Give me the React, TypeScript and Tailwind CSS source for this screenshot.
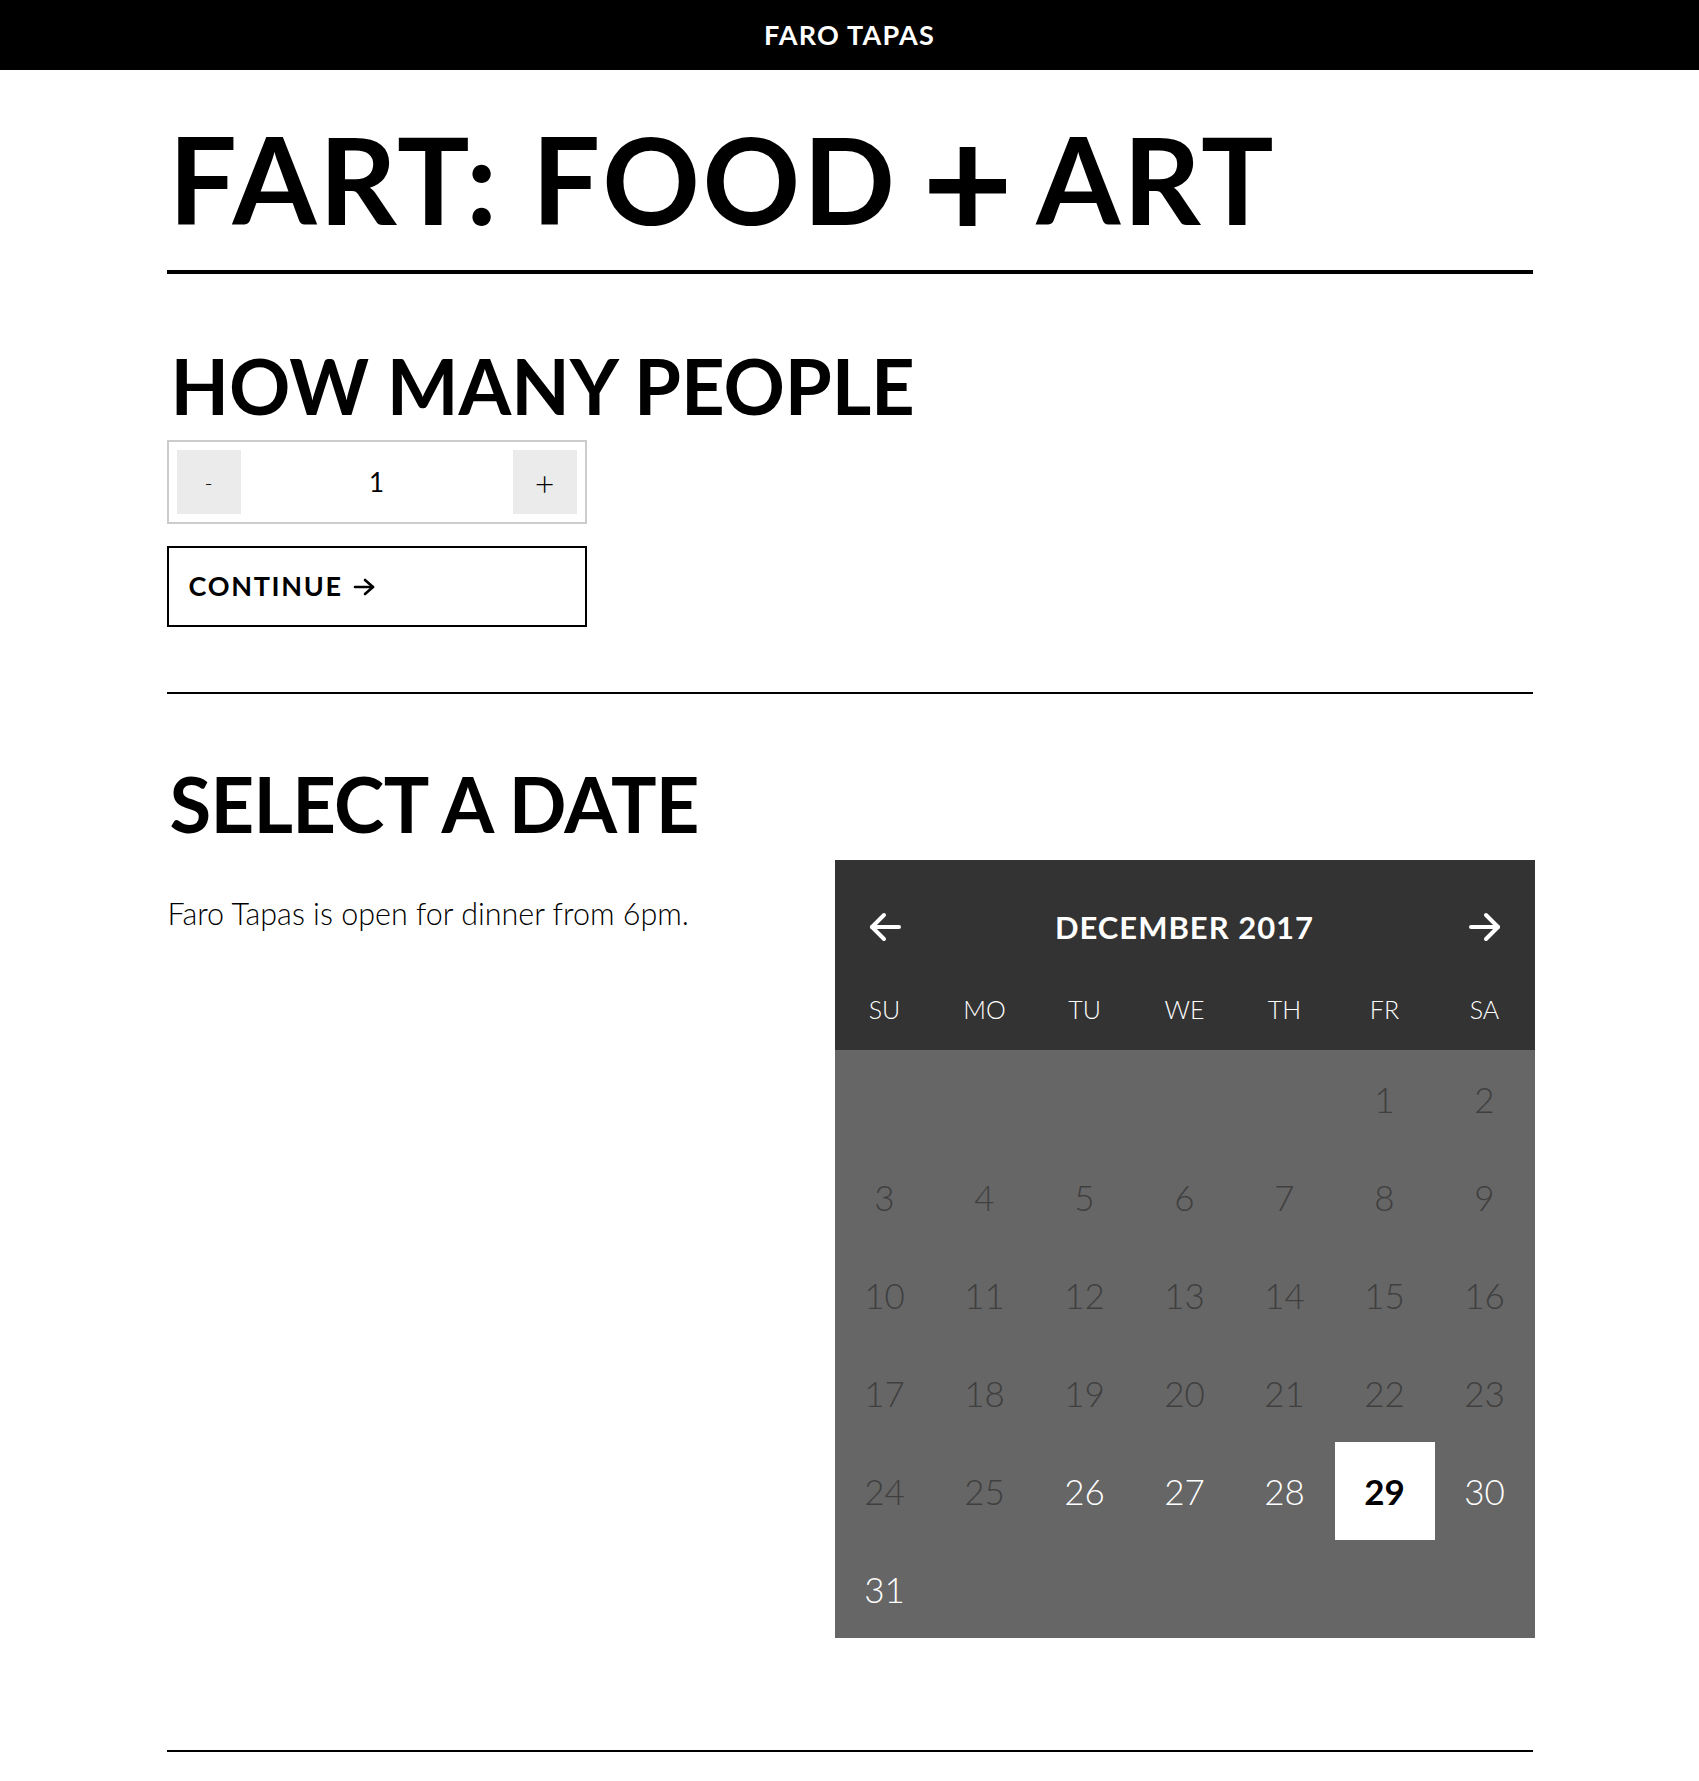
// Reservation page: party size + date picker
import { useState } from "react";

const WEEKDAYS = ["SU", "MO", "TU", "WE", "TH", "FR", "SA"];

// December 2017 starts on a Friday
const LEAD = 5;
const DAYS = 31;
const TODAY = 26;

function Arrow({ dir = "right", className = "" }: { dir?: "left" | "right"; className?: string }) {
  return (
    <svg
      width="34"
      height="30"
      viewBox="0 0 34 30"
      fill="none"
      stroke="currentColor"
      strokeWidth="4"
      strokeLinecap="round"
      strokeLinejoin="round"
      className={className}
      style={dir === "left" ? { transform: "scaleX(-1)" } : undefined}
    >
      <path d="M3 15h27" />
      <path d="M18 3l12 12-12 12" />
    </svg>
  );
}

function Stepper() {
  const [count, setCount] = useState(1);
  return (
    <div className="mt-[16px] w-[420px] h-[84px] border-2 border-[#cccccc] p-[8px] flex items-center justify-between">
      <button
        onClick={() => setCount((c) => Math.max(1, c - 1))}
        className="w-[64px] h-[64px] bg-[#ebebeb] flex items-center justify-center text-[22px] font-light text-black"
      >
        -
      </button>
      <span className="text-[26px] font-normal text-black">{count}</span>
      <button
        onClick={() => setCount((c) => c + 1)}
        className="w-[64px] h-[64px] bg-[#ebebeb] flex items-center justify-center text-[34px] font-light text-black"
      >
        +
      </button>
    </div>
  );
}

function Calendar() {
  const [selected, setSelected] = useState(29);
  const cells: (number | null)[] = [
    ...Array.from({ length: LEAD }, () => null),
    ...Array.from({ length: DAYS }, (_, i) => i + 1),
  ];
  while (cells.length % 7) cells.push(null);

  return (
    <div className="w-[700px] shrink-0 mt-[18px]">
      {/* HEADER */}
      <div className="bg-[#333333] text-white">
        <div className="h-[134px] grid grid-cols-7 items-center">
          <button className="flex justify-center">
            <Arrow dir="left" />
          </button>
          <div className="col-span-5 text-center text-[31px] font-bold tracking-[1px]">DECEMBER 2017</div>
          <button className="flex justify-center">
            <Arrow />
          </button>
        </div>
        <div className="h-[56px] pb-[26px] grid grid-cols-7 items-center">
          {WEEKDAYS.map((d) => (
            <div key={d} className="text-center text-[25px] font-light leading-[30px]">
              {d}
            </div>
          ))}
        </div>
      </div>

      {/* DIAS */}
      <div className="bg-[#666666] grid grid-cols-7">
        {cells.map((d, i) => {
          if (d === null) return <div key={i} className="h-[98px]" />;
          const past = d < TODAY;
          const active = d === selected;
          return (
            <button
              key={i}
              disabled={past}
              onClick={() => setSelected(d)}
              className={
                active
                  ? "h-[98px] flex items-center justify-center bg-white text-black font-bold text-[35px]"
                  : past
                  ? "h-[98px] flex items-center justify-center text-[#3f3f3f] font-light text-[35px]"
                  : "h-[98px] flex items-center justify-center text-white font-light text-[35px]"
              }
            >
              {d}
            </button>
          );
        })}
      </div>
    </div>
  );
}

export default function App() {
  return (
    <div className="min-h-screen bg-white font-['Lato',sans-serif] text-black">
      <header className="h-[70px] bg-black flex items-center justify-center">
        <span className="text-white text-[27px] font-bold tracking-[1.2px]">FARO TAPAS</span>
      </header>

      <main className="max-w-[1366px] mx-auto">
        <h1 className="mt-[48px] text-[121px] leading-none font-bold tracking-[2.6px] pl-[2px]">
          FART: FOOD <span className="inline-block scale-[1.3] mx-[3px]">+</span> ART
        </h1>
        <div className="mt-[31px] h-[4px] bg-black" />

        {/* QUANTIDADE */}
        <section>
          <h2 className="mt-[74px] text-[76px] leading-none font-bold tracking-[-0.1px] pl-[4px]">HOW MANY PEOPLE</h2>
          <Stepper />
          <button className="mt-[22px] w-[420px] h-[81px] border-2 border-black pl-[20px] flex items-center gap-[10px] text-[27px] font-bold tracking-[1.7px]">
            CONTINUE
            <svg width="22" height="18" viewBox="0 0 22 18" fill="none" stroke="currentColor" strokeWidth="2.6" strokeLinecap="round" strokeLinejoin="round">
              <path d="M2 9h18" />
              <path d="M12 2l8 7-8 7" />
            </svg>
          </button>
        </section>

        <div className="mt-[65px] h-[2px] bg-black" />

        {/* DATA */}
        <section>
          <h2 className="mt-[72px] text-[76px] leading-none font-bold tracking-[-0.7px] pl-[3px]">SELECT A DATE</h2>
          <div className="flex justify-between">
            <p className="mt-[56px] text-[30.5px] leading-none font-light pl-[1px]">Faro Tapas is open for dinner from 6pm.</p>
            <div className="-mr-[2px]">
              <Calendar />
            </div>
          </div>
        </section>

        <div className="mt-[112px] h-[2px] bg-black" />
        <div className="h-[29px]" />
      </main>
    </div>
  );
}
